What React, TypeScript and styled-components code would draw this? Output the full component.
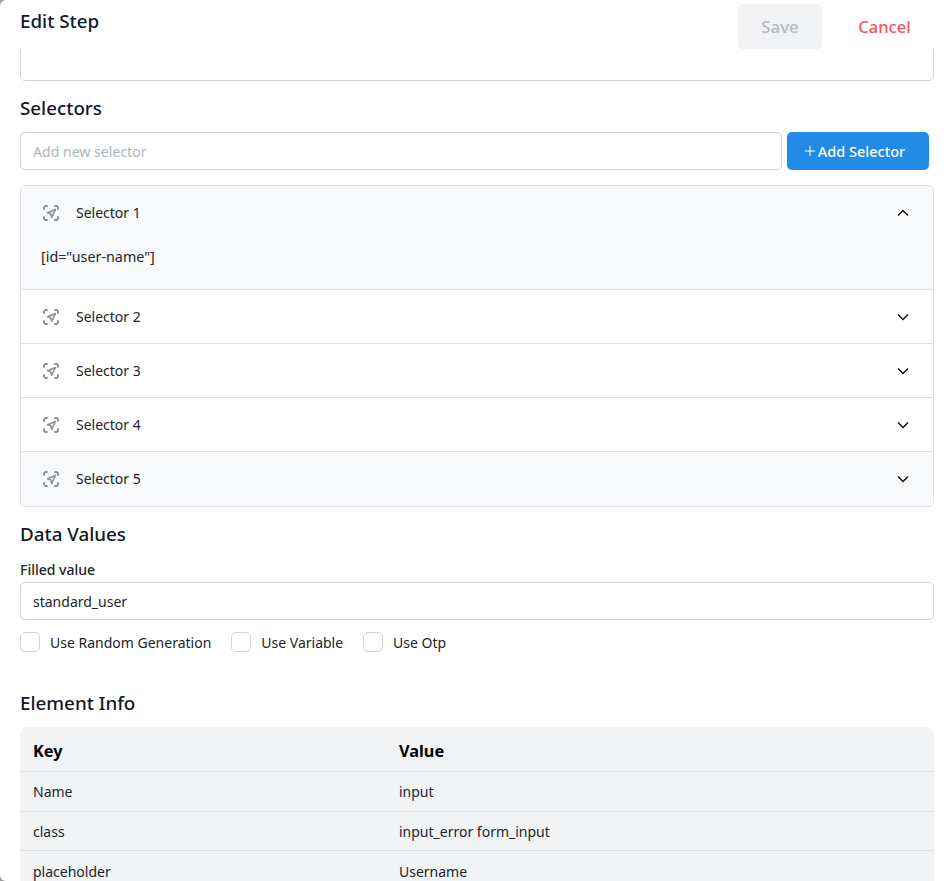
import styled, { createGlobalStyle } from "styled-components";

const GlobalStyle = createGlobalStyle`
  html, body {
    margin: 0;
    height: 100%;
    overflow: hidden;
    background: #9a9ea3;
  }
  * {
    box-sizing: border-box;
  }
  body {
    font-family: "Noto Sans", "Open Sans", sans-serif;
    color: #111827;
  }
`;

const Page = styled.div`
  height: 881px;
  overflow: hidden;
  padding: 0 17px 0 20px;
  background: #ffffff;
  border-radius: 6px 0 0 6px;
`;

const Header = styled.header`
  height: 49px;
  display: flex;
  justify-content: space-between;
  align-items: flex-start;
  margin-right: -17px;
  padding-right: 20px;
`;

const Title = styled.h2`
  margin: 8px 0 0;
  font-size: 18.8px;
  line-height: 27px;
  font-weight: 500;
  color: #111827;
`;

const Actions = styled.div`
  display: flex;
  align-items: center;
  padding-top: 4px;
`;

const SaveButton = styled.button`
  width: 84px;
  height: 45px;
  border: 0;
  border-radius: 5px;
  background: #f1f2f4;
  color: #b4b8c0;
  font: 500 16.8px "Noto Sans", sans-serif;
`;

const CancelButton = styled.button`
  width: 93px;
  height: 45px;
  border: 0;
  background: transparent;
  color: #fa5252;
  font: 500 16.5px "Noto Sans", sans-serif;
  margin-left: 16px;
`;

const ClippedArea = styled.div`
  height: 32px;
  border: 1px solid #ced4da;
  border-top: 0;
  border-radius: 0 0 5px 5px;
`;

const SectionTitle = styled.h3<{ $top: number }>`
  margin: ${(p) => p.$top}px 0 0;
  font-size: 18.8px;
  line-height: 27px;
  font-weight: 500;
  color: #111827;
`;

const AddRow = styled.div`
  display: flex;
  gap: 5px;
  margin-top: 10px;
  padding-right: 5px;
`;

const TextInput = styled.input`
  flex: 1;
  min-width: 0;
  width: 100%;
  height: 38px;
  padding: 0 12px;
  border: 1px solid #ced4da;
  border-radius: 5px;
  background: #fff;
  color: #212529;
  font: 400 14px "Noto Sans", sans-serif;
  &::placeholder {
    color: #adb5bd;
    opacity: 1;
    letter-spacing: 0.05px;
  }
`;

const AddButton = styled.button`
  width: 142px;
  height: 38px;
  flex: none;
  display: flex;
  align-items: center;
  justify-content: center;
  gap: 2px;
  padding: 0 7px 0 0;
  border: 0;
  border-radius: 5px;
  background: #228be6;
  color: #fff;
  font: 500 14.5px "Noto Sans", sans-serif;
`;

const Accordion = styled.div`
  margin-top: 15px;
  border: 1px solid #dee2e6;
  border-radius: 5px;
  overflow: hidden;
`;

const Item = styled.div<{ $shaded?: boolean; $last?: boolean }>`
  background: ${(p) => (p.$shaded ? "#f8f9fa" : "#fff")};
  border-bottom: ${(p) => (p.$last ? "0" : "1px solid #dee2e6")};
`;

const ItemHead = styled.div<{ $last?: boolean }>`
  height: ${(p) => (p.$last ? 54 : 53)}px;
  display: flex;
  align-items: center;
  padding: 0 22px ${(p) => (p.$last ? 1 : 0)}px 20px;
`;

const ItemLabel = styled.span`
  flex: 1;
  margin-left: 15px;
  font-size: 14px;
  color: #212529;
`;

const ItemBody = styled.div`
  height: 50px;
  padding: 7px 20px 0;
  font-size: 14.3px;
  line-height: 22px;
  color: #212529;
`;

const Label = styled.label`
  display: block;
  margin-top: 12px;
  font-size: 14px;
  line-height: 20px;
  font-weight: 500;
  color: #212529;
`;

const FilledInput = styled(TextInput)`
  display: block;
  margin-top: 2px;
`;

const OptionRow = styled.div`
  display: flex;
  gap: 20px;
  margin-top: 12px;
`;

const Option = styled.div`
  display: flex;
  align-items: center;
  gap: 10px;
  font-size: 14px;
  color: #212529;
`;

const OptionText = styled.span`
  padding-top: 1px;
  line-height: 19px;
`;

const Box = styled.span`
  width: 20px;
  height: 20px;
  border: 1px solid #ced4da;
  border-radius: 5px;
  background: #fff;
`;

const Table = styled.div`
  margin-top: 10px;
  background: #f1f3f5;
  border-radius: 8px 8px 0 0;
`;

const TableRow = styled.div<{ $height: number; $head?: boolean; $last?: boolean }>`
  display: grid;
  grid-template-columns: 366px 1fr;
  align-items: center;
  height: ${(p) => p.$height}px;
  padding: ${(p) => (p.$head ? "3px" : "0")} 0 0 13px;
  border-bottom: ${(p) => (p.$last ? "0" : "1px solid #dee2e6")};
`;

const HeadCell = styled.span`
  font-size: 16.3px;
  font-weight: 700;
  color: #000;
`;

const Cell = styled.span`
  font-size: 14px;
  color: #212529;
`;

const Chevron = ({ up }: { up?: boolean }) => (
  <svg width="16" height="16" viewBox="0 0 16 16" fill="none" stroke="#111" strokeWidth="1.5">
    <path d={up ? "M3 10.5 8 5.5l5 5" : "M3 5.5l5 5 5-5"} />
  </svg>
);

const TargetIcon = () => (
  <svg
    width="20"
    height="20"
    viewBox="0 0 20 20"
    fill="none"
    stroke="#868e96"
    strokeWidth="1.8"
    strokeLinecap="round"
  >
    <path d="M3 6V5a2 2 0 0 1 2-2h1M14 3h1a2 2 0 0 1 2 2v1M17 14v1a2 2 0 0 1-2 2h-1M6 17H5a2 2 0 0 1-2-2v-1" />
    <path d="M14.5 6.5 6.5 9.8l3.2 1 .9 3.5z" strokeWidth="1.5" strokeLinejoin="round" />
  </svg>
);

const selectors = ["Selector 2", "Selector 3", "Selector 4", "Selector 5"];

const App = () => {
  return (
    <Page>
      <GlobalStyle />
      <Header>
        <Title>Edit Step</Title>
        <Actions>
          <SaveButton disabled>Save</SaveButton>
          <CancelButton>Cancel</CancelButton>
        </Actions>
      </Header>
      <ClippedArea />
      <SectionTitle $top={14}>Selectors</SectionTitle>
      <AddRow>
        <TextInput placeholder="Add new selector" readOnly />
        <AddButton>
          <svg width="12" height="12" viewBox="0 0 12 12" stroke="#fff" strokeWidth="1">
            <path d="M6 1v10M1 6h10" />
          </svg>
          Add Selector
        </AddButton>
      </AddRow>
      <Accordion>
        <Item $shaded>
          <ItemHead>
            <TargetIcon />
            <ItemLabel>Selector 1</ItemLabel>
            <Chevron up />
          </ItemHead>
          <ItemBody>[id="user-name"]</ItemBody>
        </Item>
        {selectors.map((name, i) => (
          <Item key={name} $shaded={i === 3} $last={i === 3}>
            <ItemHead $last={i === 3}>
              <TargetIcon />
              <ItemLabel>{name}</ItemLabel>
              <Chevron />
            </ItemHead>
          </Item>
        ))}
      </Accordion>
      <SectionTitle $top={14}>Data Values</SectionTitle>
      <Label>Filled value</Label>
      <FilledInput value="standard_user" readOnly />
      <OptionRow>
        <Option>
          <Box />
          <OptionText>Use Random Generation</OptionText>
        </Option>
        <Option>
          <Box />
          <OptionText>Use Variable</OptionText>
        </Option>
        <Option>
          <Box />
          <OptionText>Use Otp</OptionText>
        </Option>
      </OptionRow>
      <SectionTitle $top={38}>Element Info</SectionTitle>
      <Table>
        <TableRow $height={45} $head>
          <HeadCell>Key</HeadCell>
          <HeadCell>Value</HeadCell>
        </TableRow>
        <TableRow $height={40}>
          <Cell>Name</Cell>
          <Cell>input</Cell>
        </TableRow>
        <TableRow $height={39}>
          <Cell>class</Cell>
          <Cell>input_error form_input</Cell>
        </TableRow>
        <TableRow $height={40} $last>
          <Cell>placeholder</Cell>
          <Cell>Username</Cell>
        </TableRow>
      </Table>
    </Page>
  );
};

export default App;
